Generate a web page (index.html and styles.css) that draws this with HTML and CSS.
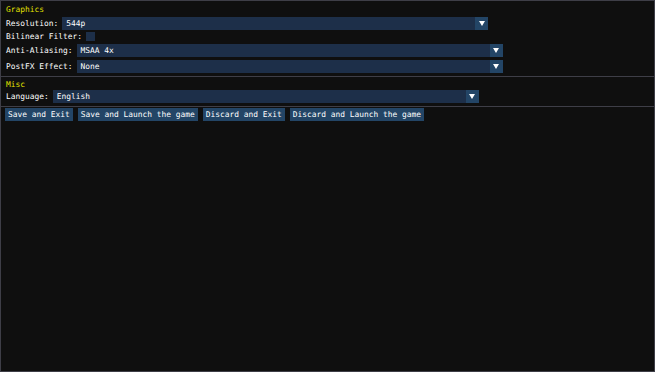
FILE: index.html
```html
<!DOCTYPE html>
<html>
<head>
<meta charset="utf-8">
<link rel="stylesheet" href="styles.css">
</head>
<body>
<div class="window">
  <div class="header">Graphics</div>
  <div class="row r-res">
    <span class="label">Resolution:</span>
    <div class="combo"><span class="value">544p</span><span class="arrow"><svg width="6" height="5" viewBox="0 0 6 5"><polygon points="0,0 6,0 3,5" fill="#fff"/></svg></span></div>
  </div>
  <div class="row r-check">
    <span class="label">Bilinear Filter:</span>
    <span class="checkbox"></span>
  </div>
  <div class="row r-aa">
    <span class="label">Anti-Aliasing:</span>
    <div class="combo"><span class="value">MSAA 4x</span><span class="arrow"><svg width="6" height="5" viewBox="0 0 6 5"><polygon points="0,0 6,0 3,5" fill="#fff"/></svg></span></div>
  </div>
  <div class="row r-fx">
    <span class="label">PostFX Effect:</span>
    <div class="combo"><span class="value">None</span><span class="arrow"><svg width="6" height="5" viewBox="0 0 6 5"><polygon points="0,0 6,0 3,5" fill="#fff"/></svg></span></div>
  </div>
  <div class="separator"></div>
  <div class="header h-misc">Misc</div>
  <div class="row r-lang">
    <span class="label">Language:</span>
    <div class="combo"><span class="value">English</span><span class="arrow"><svg width="6" height="5" viewBox="0 0 6 5"><polygon points="0,0 6,0 3,5" fill="#fff"/></svg></span></div>
  </div>
  <div class="separator sep2"></div>
  <div class="buttons">
    <span class="btn">Save and Exit</span>
    <span class="btn">Save and Launch the game</span>
    <span class="btn">Discard and Exit</span>
    <span class="btn">Discard and Launch the game</span>
  </div>
</div>
</body>
</html>
```

FILE: styles.css
```css
html, body {
  margin: 0;
  padding: 0;
  background: #0f0f0f;
}
.window {
  box-sizing: border-box;
  width: 655px;
  height: 372px;
  border: 1px solid #3e3e47;
  background: #0f0f0f;
  padding: 4px 0 0 0;
  display: flex;
  flex-direction: column;
  font-family: "DejaVu Sans Mono", "Liberation Mono", monospace;
  font-size: 7.9px;
  color: #ffffff;
}
.header {
  color: #e0e000;
  height: 10px;
  line-height: 10px;
  padding-left: 5px;
}
.row {
  display: flex;
  align-items: center;
  gap: 4px;
  padding-left: 5px;
  height: 13px;
}
.r-res { margin-top: 2px; }
.r-check { margin-top: 2px; height: 9px; }
.r-aa { margin-top: 3px; }
.r-fx { margin-top: 3px; }
.label {
  white-space: pre;
  line-height: 13px;
}
.combo {
  width: 426px;
  height: 13px;
  background: #1d2f49;
  display: flex;
  align-items: center;
  justify-content: space-between;
}
.value {
  padding-left: 4px;
  line-height: 13px;
}
.arrow {
  width: 13px;
  height: 13px;
  background: #234566;
  display: flex;
  align-items: center;
  justify-content: center;
}
.checkbox {
  width: 9px;
  height: 9px;
  background: #1d2f49;
}
.separator {
  height: 1px;
  background: #3e3e47;
  margin-top: 3px;
}
.h-misc { margin-top: 3px; }
.r-lang { margin-top: 0px; }
.sep2 { margin-top: 3px; }
.buttons {
  display: flex;
  gap: 5px;
  padding-left: 4px;
  margin-top: 1px;
}
.btn {
  height: 13px;
  line-height: 13px;
  padding: 0 3px;
  background: #234566;
  white-space: pre;
}
```
